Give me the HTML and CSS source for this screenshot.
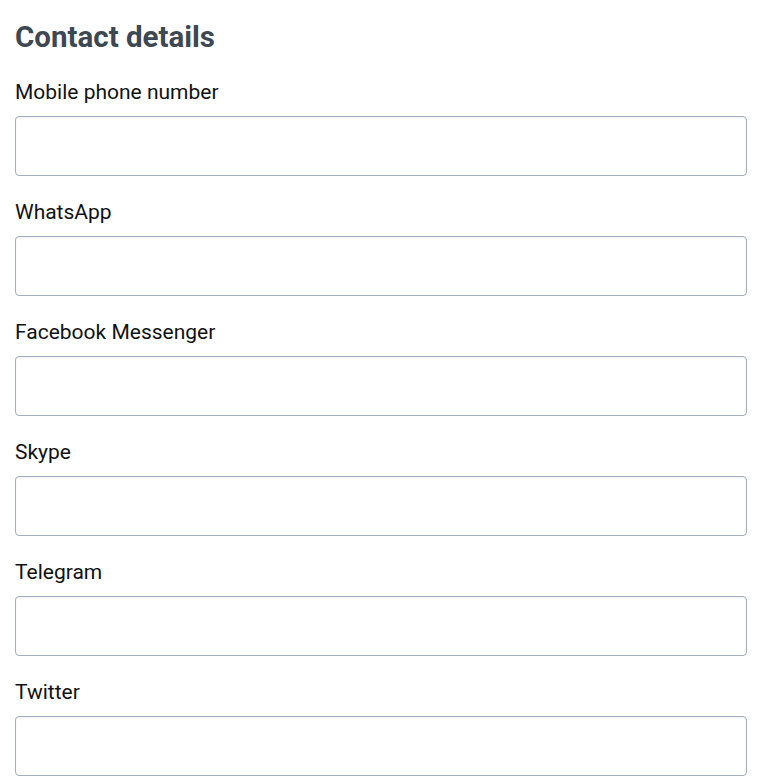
FILE: index.html
```html
<!DOCTYPE html>
<html>
<head>
<meta charset="utf-8">
<link rel="stylesheet" href="styles.css">
</head>
<body>
<form class="contact">
  <h2 class="title">Contact details</h2>
  <div class="field">
    <label class="label" for="f1">Mobile phone number</label>
    <input class="input" id="f1" type="text">
  </div>
  <div class="field">
    <label class="label" for="f2">WhatsApp</label>
    <input class="input" id="f2" type="text">
  </div>
  <div class="field">
    <label class="label" for="f3">Facebook Messenger</label>
    <input class="input" id="f3" type="text">
  </div>
  <div class="field">
    <label class="label" for="f4">Skype</label>
    <input class="input" id="f4" type="text">
  </div>
  <div class="field">
    <label class="label" for="f5">Telegram</label>
    <input class="input" id="f5" type="text">
  </div>
  <div class="field">
    <label class="label" for="f6">Twitter</label>
    <input class="input" id="f6" type="text">
  </div>
</form>
</body>
</html>
```
FILE: styles.css
```css
html, body {
  margin: 0;
  padding: 0;
  background: #ffffff;
}
body {
  font-family: Roboto, "Liberation Sans", sans-serif;
}
.contact {
  padding: 19px 27px 0 15px;
  display: flex;
  flex-direction: column;
}
.title {
  margin: 0 0 1px 0;
  font-size: 29.5px;
  line-height: 36px;
  font-weight: 700;
  color: #3d4852;
}
.field {
  display: flex;
  flex-direction: column;
  margin-top: 24px;
}
.label {
  font-size: 21px;
  line-height: 24px;
  color: #111111;
  margin-bottom: 12px;
}
.input {
  box-sizing: border-box;
  height: 60px;
  width: 100%;
  margin: 0;
  border: 1px solid #a0aec0;
  border-radius: 4px;
  background: #ffffff;
  box-shadow: inset 0 1px 2px rgba(0, 0, 0, 0.06);
  font-family: inherit;
  font-size: 20px;
  padding: 0 12px;
  outline: none;
}
```
